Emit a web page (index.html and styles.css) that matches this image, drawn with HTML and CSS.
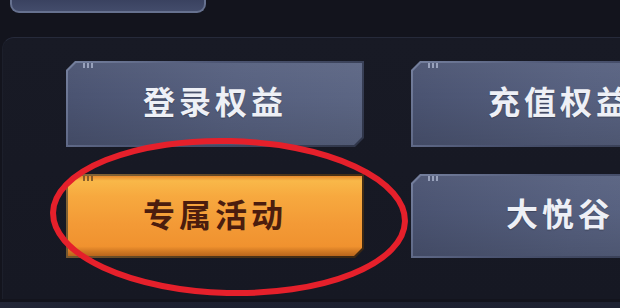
FILE: index.html
```html
<!DOCTYPE html>
<html lang="zh">
<head>
<meta charset="utf-8">
<link rel="stylesheet" href="styles.css">
</head>
<body>
<div class="screen">
  <div class="tab"></div>
  <div class="panel">
    <div class="grid">
      <div class="btn btn-blue"><div class="btn-inner"><span class="ticks"></span><span class="label">登录权益</span></div></div>
      <div class="btn btn-blue"><div class="btn-inner"><span class="ticks"></span><span class="label">充值权益</span></div></div>
      <div class="btn btn-orange"><div class="btn-inner"><span class="ticks"></span><span class="label">专属活动</span></div></div>
      <div class="btn btn-blue"><div class="btn-inner"><span class="ticks"></span><span class="label">大悦谷</span></div></div>
    </div>
  </div>
  <div class="footer-line"></div>
  <svg class="circle" width="370" height="170" viewBox="0 0 370 170">
    <ellipse cx="185" cy="82" rx="176" ry="76" fill="none" stroke="#e5202b" stroke-width="6" transform="rotate(1.5 185 82)"/>
  </svg>
</div>
</body>
</html>
```

FILE: styles.css
```css
* { box-sizing: border-box; }
html, body { margin: 0; padding: 0; }
body {
  width: 620px;
  height: 308px;
  overflow: hidden;
  background: #13141d;
  font-family: "Noto Sans CJK SC", "Noto Sans", sans-serif;
}
.screen {
  position: relative;
  width: 620px;
  height: 308px;
  display: flex;
  flex-direction: column;
}
.tab {
  margin-left: 10px;
  width: 196px;
  height: 13px;
  background: linear-gradient(#3a4260, #434c6b);
  border: 2px solid #66718f;
  border-top: none;
  border-radius: 0 0 9px 9px;
}
.panel {
  margin-top: 24px;
  margin-left: 2px;
  height: 262px;
  border-top: 1px solid #262a3a;
  border-left: 1px solid #1c1f2b;
  border-radius: 12px 0 0 0;
  background: linear-gradient(180deg, #181a25 0%, #161823 100%);
  padding: 23px 0 0 63px;
}
.grid {
  display: grid;
  grid-template-columns: 298px 298px;
  grid-template-rows: 86px 84px;
  column-gap: 47px;
  row-gap: 27px;
}
.btn {
  position: relative;
  padding: 2px;
  clip-path: polygon(9px 0, 100% 0, 100% calc(100% - 9px), calc(100% - 9px) 100%, 0 100%, 0 9px);
}
.btn-inner {
  position: relative;
  height: 100%;
  display: flex;
  align-items: center;
  justify-content: center;
  padding-bottom: 8px;
  clip-path: polygon(8px 0, 100% 0, 100% calc(100% - 8px), calc(100% - 8px) 100%, 0 100%, 0 8px);
}
.btn-blue { background: linear-gradient(135deg, #76819f 0%, #4d5674 40%, #2e3447 100%); }
.btn-blue .btn-inner {
  background:
    linear-gradient(180deg, rgba(255,255,255,0.04) 0%, rgba(0,0,0,0) 40%, rgba(0,0,0,0.12) 100%),
    linear-gradient(100deg, #4a5371 0%, #56607f 55%, #5c6684 100%);
}
.btn-orange {
  background: linear-gradient(135deg, #8a6a3a 0%, #4d3418 60%, #3a2612 100%);
}
.btn-orange .btn-inner {
  background: linear-gradient(180deg, #e88a2e 0%, #f9b849 6%, #f7a93f 25%, #f39a36 60%, #f0922f 88%, #d27a24 94%, #b8651c 100%);
  padding-bottom: 6px;
}
.ticks {
  position: absolute;
  left: 15px;
  top: 0;
  width: 12px;
  height: 5px;
  background: repeating-linear-gradient(90deg, #aab3cc 0 2px, transparent 2px 4px);
  opacity: 0.8;
}
.btn-orange .ticks { background: repeating-linear-gradient(90deg, #6b4a24 0 2px, transparent 2px 4px); }
.label {
  font-size: 32px;
  font-weight: 700;
  letter-spacing: 4px;
  line-height: 1;
  color: #eef0f6;
  text-shadow: 0 1px 1px rgba(0,0,0,0.25);
  white-space: nowrap;
}
.btn-orange .label { color: #4b1d0e; text-shadow: none; }
.footer-line {
  position: absolute;
  left: 0;
  right: 0;
  top: 302px;
  height: 6px;
  background: linear-gradient(90deg, #232738 0%, #1d2030 20%, #1e2232 100%);
}
.circle {
  position: absolute;
  left: 44px;
  top: 135px;
}
```
